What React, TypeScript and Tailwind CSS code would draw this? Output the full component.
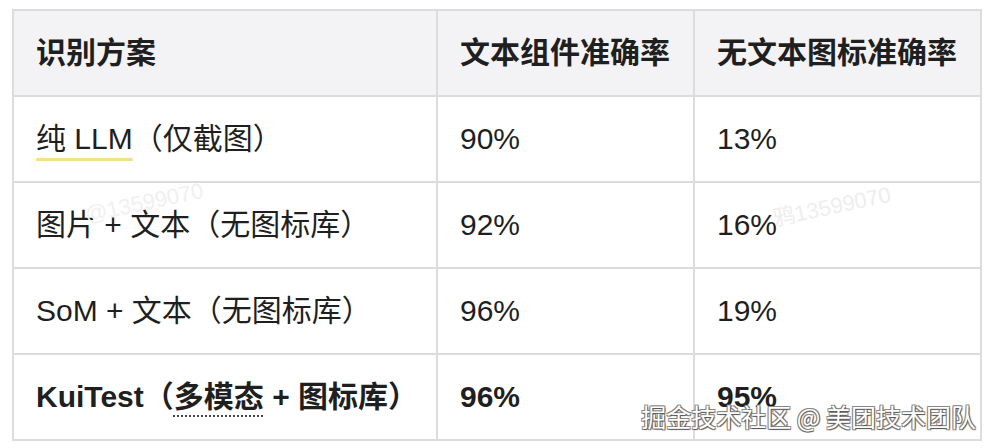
import * as React from "react";

type Row = { scheme: React.ReactNode; text: string; icon: string; bold?: boolean };

const rows: Row[] = [
  {
    scheme: (
      <>
        <span className="underline decoration-[#f3df8c] decoration-[3px] underline-offset-[9px]">纯 LLM</span>
        （仅截图）
      </>
    ),
    text: "90%",
    icon: "13%",
  },
  { scheme: "图片 + 文本（无图标库）", text: "92%", icon: "16%" },
  { scheme: "SoM + 文本（无图标库）", text: "96%", icon: "19%" },
  {
    scheme: (
      <>
        KuiTest（
        <span className="underline decoration-dotted decoration-[2px] decoration-[#444] underline-offset-[8px]">多模态</span>
        {" "}+ 图标库）
      </>
    ),
    text: "96%",
    icon: "95%",
    bold: true,
  },
];

function Cell({ children, head }: { children: React.ReactNode; head?: boolean }) {
  return (
    <div
      className={`flex h-[86px] items-center pl-[22px] border-b-2 border-r-2 border-[#dcdcdf] ${
        head ? "bg-[#f3f3f5]" : ""
      }`}
    >
      {children}
    </div>
  );
}

export default function App() {
  return (
    <div
      className="relative w-[992px] h-[448px] overflow-hidden bg-white pl-[12px] pt-[9px] text-[#1f1f1f]"
      style={{ fontFamily: '"Liberation Sans", "Noto Sans CJK SC", sans-serif' }}
    >
      <div className="grid w-[970px] grid-cols-[424px_257px_287px] border-l-2 border-t-2 border-[#dcdcdf] text-[30px] leading-none">
        <Cell head>
          <span className="font-bold">识别方案</span>
        </Cell>
        <Cell head>
          <span className="font-bold">文本组件准确率</span>
        </Cell>
        <Cell head>
          <span className="font-bold">无文本图标准确率</span>
        </Cell>
        {rows.map((r, i) => (
          <React.Fragment key={i}>
            <Cell>
              <span className={r.bold ? "font-bold" : ""}>{r.scheme}</span>
            </Cell>
            <Cell>
              <span className={r.bold ? "font-bold" : ""}>{r.text}</span>
            </Cell>
            <Cell>
              <span className={r.bold ? "font-bold" : ""}>{r.icon}</span>
            </Cell>
          </React.Fragment>
        ))}
      </div>

      {/* faint rotated watermarks */}
      <span className="pointer-events-none absolute left-[84px] top-[192px] -rotate-[12deg] text-[22px] leading-none text-[#f0f0f0]">
        @13599070
      </span>
      <span className="pointer-events-none absolute left-[772px] top-[196px] -rotate-[12deg] text-[22px] leading-none text-[#eeeeee]">
        鸦13599070
      </span>

      {/* site watermark */}
      <span
        className="pointer-events-none absolute right-[16px] top-[404px] text-[25px] leading-none text-white [text-shadow:1px_1px_1px_#555,-1px_-1px_0_#888,1px_-1px_0_#888,-1px_1px_0_#888]"
        style={{ fontFamily: '"Noto Sans CJK SC", sans-serif' }}
      >
        掘金技术社区 @ 美团技术团队
      </span>
    </div>
  );
}
